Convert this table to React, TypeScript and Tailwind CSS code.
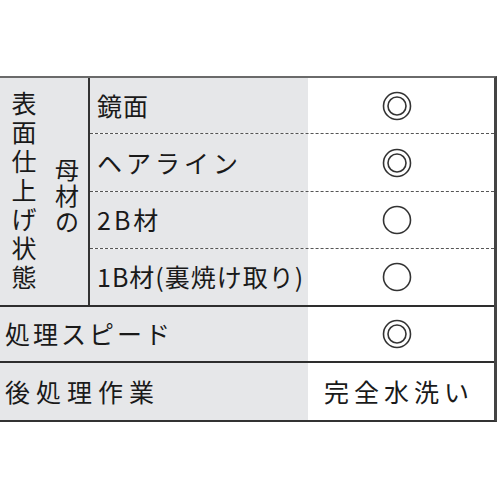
import React from "react";

const font = { fontFamily: '"Noto Sans CJK JP", "Noto Sans", sans-serif' };

function VText({ text, className, itemClass }: { text: string; className: string; itemClass: string }) {
  return (
    <div className={`flex flex-col items-center ${className}`}>
      {text.split("").map((c, i) => (
        <span key={i} className={`flex items-center justify-center ${itemClass}`}>
          {c}
        </span>
      ))}
    </div>
  );
}

function Mark({ double }: { double: boolean }) {
  return (
    <svg width="32" height="32" viewBox="0 0 32 32">
      <circle cx="16" cy="16" r="13.5" fill="none" stroke="#333" strokeWidth="1.6" />
      {double && <circle cx="16" cy="16" r="9" fill="none" stroke="#333" strokeWidth="1.6" />}
    </svg>
  );
}

export default function App() {
  const rows = [
    { label: "鏡面", double: true, h: "h-[56px]", t: "tracking-[1px]" },
    { label: "ヘアライン", double: true, h: "h-[58px]", t: "tracking-[4px]" },
    { label: "2B材", double: false, h: "h-[57px]", t: "tracking-[3px]" },
    { label: "1B材(裏焼け取り)", double: false, h: "h-[56px]", t: "tracking-[1px]" },
  ];
  return (
    <div className="w-[500px] h-[500px] bg-white pt-[76px]" style={font}>
      <div className="w-[497px] border-t-2 border-t-[#6a6a6a] border-r-[3px] border-r-[#444] border-b-2 border-b-[#333] text-[#1a1a1a]">
        <div className="flex h-[229px] border-b-2 border-b-[#2e2e2e]">
          <div className="w-[88px] bg-[#e6e7e9] flex items-center">
            <VText text="表面仕上げ状態" className="w-[48px] text-[25px] pb-[4px]" itemClass="h-[29px] leading-[29px]" />
            <VText text="母材の" className="w-[38px] text-[24px] pt-[6px]" itemClass="h-[26px] leading-[26px]" />
          </div>
          <div className="w-[2px] bg-[#333]" />
          <div className="flex-1 flex flex-col">
            {rows.map((r, i) => (
              <div
                key={i}
                className={`flex ${r.h} ${i < 3 ? "border-b border-dashed border-b-[#555]" : ""}`}
              >
                <div className={`w-[218px] bg-[#e6e7e9] flex items-center pl-[7px] text-[25px] ${r.t}`}>
                  {r.label}
                </div>
                <div className="flex-1 flex items-center justify-center pr-[8px]">
                  <Mark double={r.double} />
                </div>
              </div>
            ))}
          </div>
        </div>
        <div className="flex h-[56px] border-b-2 border-b-[#2e2e2e]">
          <div className="w-[308px] bg-[#e6e7e9] flex items-center pl-[5px] text-[25px] tracking-[3px]">処理スピード</div>
          <div className="flex-1 flex items-center justify-center pr-[8px]">
            <Mark double={true} />
          </div>
        </div>
        <div className="flex h-[57px]">
          <div className="w-[308px] bg-[#e6e7e9] flex items-center pl-[5px] text-[25px] tracking-[6px]">後処理作業</div>
          <div className="flex-1 flex items-center justify-center pr-[4px] text-[25px] tracking-[5px]">完全水洗い</div>
        </div>
      </div>
    </div>
  );
}
